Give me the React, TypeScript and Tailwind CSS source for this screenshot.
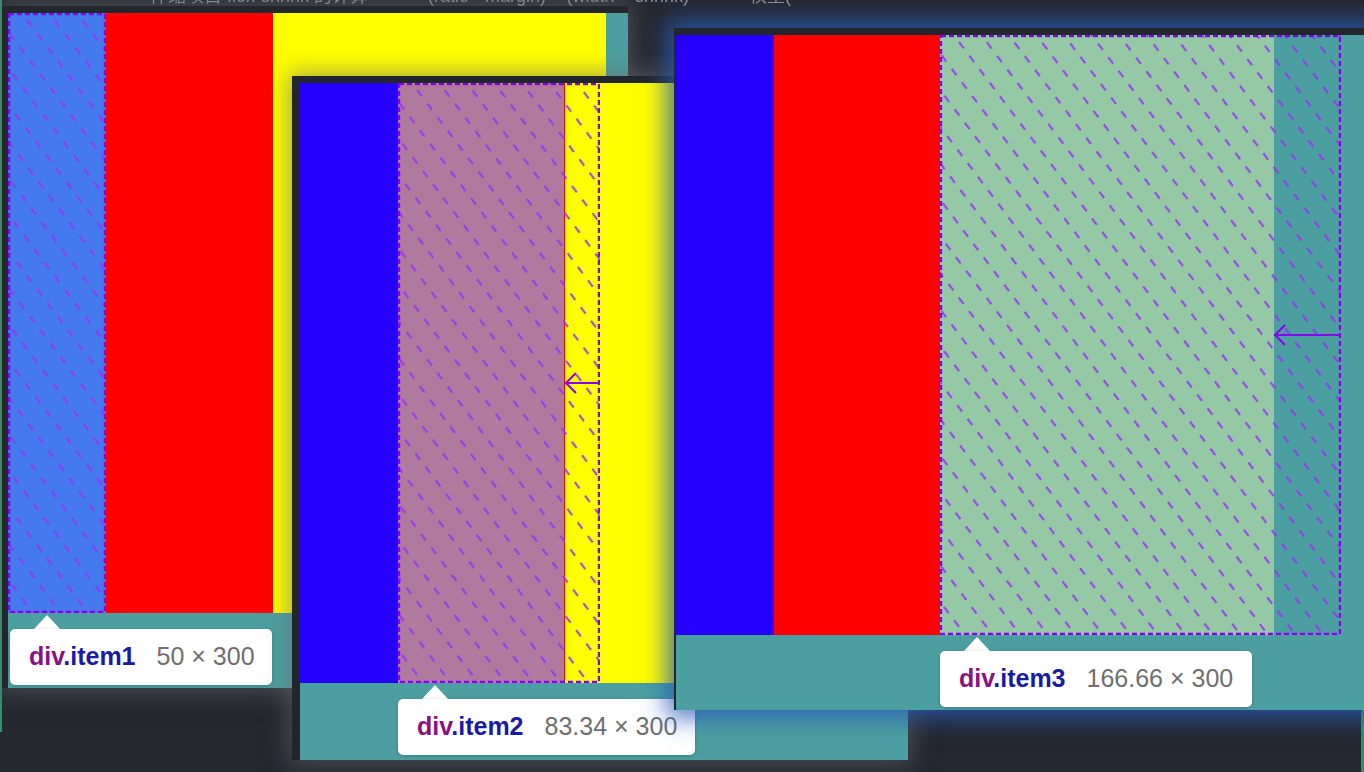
import { useId } from "react";

// dashed diagonal hatch used by the devtools highlight
function Hatch() {
  const id = "h" + useId().replace(/[^a-zA-Z0-9]/g, "");
  return (
    <svg className="absolute inset-0 h-full w-full" aria-hidden>
      <defs>
        <pattern id={id} width="22" height="17" patternUnits="userSpaceOnUse" patternTransform="rotate(-37)">
          <line x1="11" y1="0" x2="11" y2="8" stroke="#9434f0" strokeOpacity="0.85" strokeWidth="2.2" />
        </pattern>
      </defs>
      <rect width="100%" height="100%" fill={`url(#${id})`} />
    </svg>
  );
}

function HighlightBox({ className, w, item }: { className: string; w: number; item?: number }) {
  return (
    <div className={`absolute top-0 h-[600px] ${className}`}>
      <Hatch />
      <svg className="absolute inset-0 h-full w-full" aria-hidden>
        <rect x="1" y="1" width={w - 2} height="598" fill="none" stroke="#8800f0" strokeWidth="2.4" strokeDasharray="5 3" />
        {item && (
          <g stroke="#8800f0" strokeWidth="2" fill="none">
            <line x1={w - 1} y1="300" x2={item} y2="300" />
            <polyline points={`${item + 11},290 ${item + 1},300 ${item + 11},310`} />
          </g>
        )}
      </svg>
    </div>
  );
}

function Tip({ className, name, dims }: { className: string; name: string; dims: string }) {
  return (
    <div className={`absolute top-[602px] ${className}`}>
      <div className="ml-[24px] h-0 w-0 border-x-[13px] border-b-[14px] border-x-transparent border-b-white" />
      <div className="flex h-[56px] items-center rounded-[5px] bg-white pl-[19px] text-[25px] shadow-[0_1px_4px_rgba(0,0,0,0.2)] font-['Liberation_Sans',Arial,sans-serif]">
        <span className="font-bold">
          <span className="text-[#881280]">div</span>
          <span className="text-[#1a1aa6]">.{name}</span>
        </span>
        <span className="ml-[21px] text-[#6f6f6f]">{dims}</span>
      </div>
    </div>
  );
}

export default function App() {
  return (
    <div className="relative h-[772px] w-[1364px] overflow-hidden bg-[#25282f]">
      {/* page text peeking behind the windows */}
      <div className="absolute left-[150px] top-[-17px] flex gap-[60px] whitespace-nowrap text-[18px] text-[#8e9198] blur-[0.6px] font-['Liberation_Sans','Noto_Sans_CJK_SC',sans-serif]">
        <span>伸缩项目 flex-shrink 的计算</span>
        <span>(ratio · margin) × (width × shrink)</span>
        <span>权重(</span>
      </div>
      <div className="absolute left-0 top-0 h-[732px] w-[2px] bg-[#2c9468]" />
      <div className="absolute right-0 top-[710px] h-[62px] w-[3px] bg-[#2c9468]" />

      {/* window 1 */}
      <div className="absolute left-[2px] top-[6px] h-[682px] w-[626px] border-l-[6px] border-t-[7px] border-[#23262d] bg-[#4c9fa0] shadow-[0_0_22px_4px_rgba(105,106,112,0.55)]">
        <div className="relative flex h-[600px]">
          <div className="w-[98px] bg-[#4479ef]" />
          <div className="w-[167px] bg-[#ff0000]" />
          <div className="w-[333px] bg-[#ffff00]" />
          <HighlightBox className="left-0 w-[98px]" w={98} />
        </div>
        <Tip className="left-[2px] w-[262px]" name="item1" dims="50 × 300" />
      </div>

      {/* window 2 */}
      <div className="absolute left-[292px] top-[76px] h-[684px] w-[616px] border-l-[8px] border-t-[7px] border-[#23262d] bg-[#4c9fa0] shadow-[0_0_22px_4px_rgba(105,106,112,0.55)]">
        <div className="relative flex h-[600px]">
          <div className="w-[98px] bg-[#2600ff]" />
          <div className="w-[167px] border-r border-[#ff0000] bg-[#b07a9e]" />
          <div className="w-[333px] bg-[#ffff00]" />
          <HighlightBox className="left-[98px] w-[202px]" w={202} item={167} />
        </div>
        <Tip className="left-[98px] w-[297px]" name="item2" dims="83.34 × 300" />
      </div>

      {/* window 3 */}
      <div className="absolute left-[674px] top-[28px] h-[682px] w-[700px] border-l-[2px] border-t-[7px] border-[#23262d] bg-[#4c9fa0] shadow-[0_0_24px_7px_rgba(40,90,185,0.85)]">
        <div className="relative flex h-[600px]">
          <div className="w-[98px] bg-[#2600ff]" />
          <div className="w-[166px] bg-[#ff0000]" />
          <div className="w-[334px] bg-[#95c9a6]" />
          <HighlightBox className="left-[264px] w-[401px]" w={401} item={334} />
        </div>
        <Tip className="left-[264px] w-[312px]" name="item3" dims="166.66 × 300" />
      </div>
    </div>
  );
}
